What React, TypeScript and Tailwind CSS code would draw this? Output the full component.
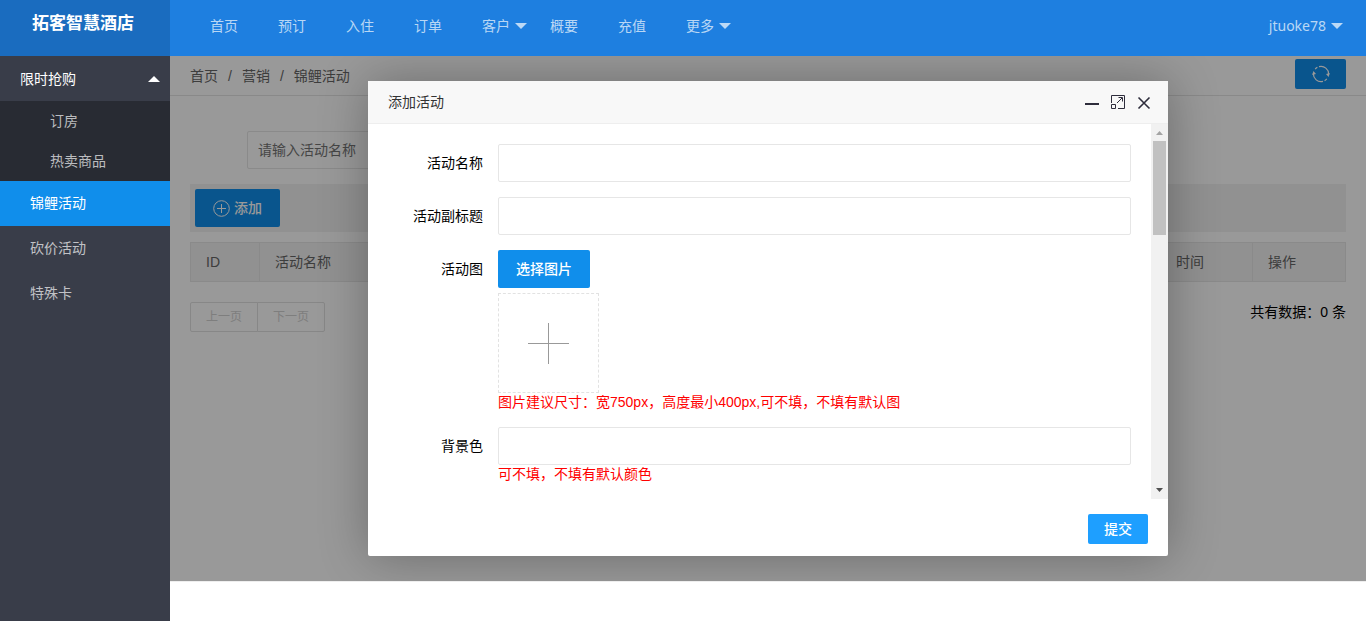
import React, { useState } from "react";

const topLinks = [
  { name: "首页" },
  { name: "预订" },
  { name: "入住" },
  { name: "订单" },
  { name: "客户", more: true },
  { name: "概要" },
  { name: "充值" },
  { name: "更多", more: true },
];

const sideLinks = ["锦鲤活动", "砍价活动", "特殊卡"];

function Caret({ className }: { className: string }) {
  return (
    <svg className={className} width="12" height="6" viewBox="0 0 12 6">
      <path d="M0 0h12L6 6z" fill="currentColor" />
    </svg>
  );
}

function RefreshIcon() {
  return (
    <svg width="18" height="18" viewBox="0 0 18 18" fill="none" stroke="currentColor">
      {/* Two half turns, each with a short broken-off piece */}
      <path d="M7 1.7A7.6 7.6 0 0 1 16.6 9.6M11 16.3A7.6 7.6 0 0 1 1.4 8.4" strokeWidth="1.2" />
      <path d="M3.2 4.1A7.6 7.6 0 0 1 5.4 2.3M14.8 13.9A7.6 7.6 0 0 1 12.6 15.7" strokeWidth="1.2" />
      <path d="M14 9l2.6 3L17.8 8zM4 9L1.4 6 .2 10z" fill="currentColor" stroke="none" />
    </svg>
  );
}

function AddIcon() {
  return (
    <svg width="17" height="17" viewBox="0 0 17 17" fill="none" stroke="currentColor">
      <circle cx="8.5" cy="8.5" r="7.8" />
      <path d="M8.5 4v9M4 8.5h9" />
    </svg>
  );
}

function Header() {
  return (
    <header className="flex h-14 shrink-0 bg-[#1e7fe0] font-['Noto_Sans','Noto_Sans_CJK_SC',sans-serif] text-white/70">
      <h1 className="w-[170px] shrink-0 bg-[#1a6cbf] pr-1 text-center text-[17px] leading-[46px] font-bold text-white">
        拓客智慧酒店
      </h1>
      <nav className="flex flex-1 px-5 leading-[52px]">
        {topLinks.map((link) => (
          <a key={link.name} href="#" className="relative px-5">
            {link.name}
            {link.more && <Caret className="absolute top-[23px] right-[3px]" />}
          </a>
        ))}
        <a href="#" className="relative ml-auto px-5">
          jtuoke78
          <Caret className="absolute top-[23px] right-[3px]" />
        </a>
      </nav>
    </header>
  );
}

function Sidebar() {
  const [active, setActive] = useState("锦鲤活动");
  return (
    <aside className="w-[170px] shrink-0 bg-[#393d49] text-white/70">
      <a href="#" className="flex h-[45px] items-center justify-between pr-[10px] pl-5 text-white">
        限时抢购
        <Caret className="rotate-180" />
      </a>
      <div className="bg-[#282b33] leading-10">
        <a href="#" className="block pl-[50px]">订房</a>
        <a href="#" className="block pl-[50px]">热卖商品</a>
      </div>
      {sideLinks.map((name) => (
        <a
          key={name}
          href="#"
          onClick={() => setActive(name)}
          className={
            active === name
              ? "block bg-[#108eeb] pl-[30px] leading-[45px] text-white"
              : "block pl-[30px] leading-[45px]"
          }
        >
          {name}
        </a>
      ))}
    </aside>
  );
}

function ActivityList() {
  return (
    <div>
      {/* Breadcrumb */}
      <div className="flex h-10 items-center justify-between border-b border-[#e5e5e5] px-5 text-[#666]">
        <div className="flex gap-[10px]">
          <a href="#">首页</a>
          <span>/</span>
          <a href="#">营销</a>
          <span>/</span>
          <a href="#">锦鲤活动</a>
        </div>
        <button
          aria-label="刷新"
          className="mb-[3px] flex h-[30px] w-[51px] items-center justify-center rounded-xs bg-[#108eeb] text-white"
        >
          <RefreshIcon />
        </button>
      </div>

      <div className="px-5 pt-[35px]">
        <input
          aria-label="活动名称"
          placeholder="请输入活动名称"
          className="ml-[57px] block h-[38px] w-[190px] rounded-xs border border-[#e6e6e6] pl-[10px] placeholder:text-[#757575]"
        />

        <div className="mt-[15px] bg-[#f2f2f2] p-[5px]">
          <button className="flex h-[38px] w-[85px] items-center justify-center gap-1 rounded-xs bg-[#108eeb] font-medium text-white">
            <AddIcon />
            添加
          </button>
        </div>

        <table className="mt-[10px] w-full table-fixed border-collapse bg-[#f2f2f2] text-left text-[#666]">
          <thead>
            <tr className="h-[39px]">
              <th className="w-[69px] border border-[#e6e6e6] px-[15px] font-normal">ID</th>
              <th className="border border-[#e6e6e6] px-[15px] font-normal">活动名称</th>
              <th className="w-[92px] border border-[#e6e6e6] px-[15px] font-normal">时间</th>
              <th className="w-[93px] border border-[#e6e6e6] px-[15px] font-normal">操作</th>
            </tr>
          </thead>
        </table>

        <div className="mt-5 flex justify-between">
          <div className="flex text-xs text-[#d2d2d2]">
            <button className="h-[30px] w-[68px] rounded-l-xs border border-[#e2e2e2]">上一页</button>
            <button className="-ml-px h-[30px] w-[68px] rounded-r-xs border border-[#e2e2e2]">下一页</button>
          </div>
          <span className="leading-5">共有数据：0 条</span>
        </div>
      </div>
    </div>
  );
}

function Field({ id, label, children }: { id: string; label: string; children: React.ReactNode }) {
  return (
    <div className="mb-[15px] flex">
      <label htmlFor={id} className="w-[110px] shrink-0 px-[15px] text-right leading-[38px]">
        {label}
      </label>
      <div className="min-w-0 flex-1">{children}</div>
    </div>
  );
}

const inputStyle = "block h-[38px] w-full rounded-xs border border-[#e6e6e6] px-[10px]";

function AddDialog() {
  return (
    <div
      role="dialog"
      aria-label="添加活动"
      className="flex h-[475px] w-[800px] flex-col rounded-xs bg-white shadow-[1px_1px_50px_rgba(0,0,0,0.3)]"
    >
      <div className="flex h-[43px] shrink-0 items-center justify-between border-b border-[#eee] bg-[#f8f8f8] pr-4 pl-5 text-[#333]">
        添加活动
        <div className="flex gap-[10px] text-[#2e2d3c]">
          <button aria-label="最小化">
            <svg width="16" height="16" viewBox="0 0 16 16">
              <path d="M1 9h14v2H1z" fill="currentColor" />
            </svg>
          </button>
          <button aria-label="最大化">
            <svg width="16" height="16" viewBox="0 0 16 16" fill="none" stroke="currentColor">
              <path d="M1.5 9V1.5h13v13H8M1.5 10.5h4v4h-4zM7 9l5-5M8.5 3.5h4v4" />
            </svg>
          </button>
          <button aria-label="关闭">
            <svg width="16" height="16" viewBox="0 0 16 16" fill="none" stroke="currentColor">
              <path d="M2.5 3.5l11 11M13.5 3.5l-11 11" strokeWidth="1.6" />
            </svg>
          </button>
        </div>
      </div>

      <div className="flex min-h-0 flex-1">
        <form className="flex-1 overflow-hidden p-5">
          <Field id="name" label="活动名称">
            <input id="name" className={inputStyle} />
          </Field>
          <Field id="subtitle" label="活动副标题">
            <input id="subtitle" className={inputStyle} />
          </Field>
          <Field id="picture" label="活动图">
            <button
              id="picture"
              type="button"
              className="block h-[38px] w-[92px] rounded-xs bg-[#108eeb] font-medium text-white"
            >
              选择图片
            </button>
            <div className="mt-[5px] flex h-[100px] w-[101px] items-center justify-center border border-dashed border-[#e2e2e2] text-[#999]">
              <svg width="41" height="42" viewBox="0 0 41 42" stroke="currentColor">
                <path d="M20.5 1v41M0 21.5h41" />
              </svg>
            </div>
            <p className="leading-[19px] text-[#f00]">
              图片建议尺寸：宽750px，高度最小400px,可不填，不填有默认图
            </p>
          </Field>
          <Field id="color" label="背景色">
            <input id="color" className={inputStyle} />
            <p className="leading-[19px] text-[#f00]">可不填，不填有默认颜色</p>
          </Field>
        </form>

        {/* Scrollbar */}
        <div className="flex w-[17px] flex-col items-center bg-[#f1f1f1] text-[#a3a3a3]">
          <svg width="17" height="17" viewBox="0 0 17 17">
            <path d="M5 11h7L8.5 7z" fill="currentColor" />
          </svg>
          <div className="h-[94px] w-[13px] bg-[#c1c1c1]" />
          <svg className="mt-auto text-[#505050]" width="17" height="17" viewBox="0 0 17 17">
            <path d="M5 6h7l-3.5 4z" fill="currentColor" />
          </svg>
        </div>
      </div>

      <div className="flex h-[57px] shrink-0 justify-end px-5 pt-[15px]">
        <button className="h-[30px] w-[60px] rounded-xs bg-[#1e9fff] font-medium text-white">提交</button>
      </div>
    </div>
  );
}

export default function App() {
  return (
    <div className="flex h-screen flex-col bg-white font-['Liberation_Sans','Noto_Sans_CJK_SC',sans-serif] text-sm text-black">
      <Header />
      <div className="flex min-h-0 flex-1">
        <Sidebar />
        <div className="flex min-w-0 flex-1 flex-col">
          <main className="relative flex-1 overflow-hidden">
            <ActivityList />
            <div className="absolute inset-0 flex items-center justify-center bg-black/40">
              <AddDialog />
            </div>
          </main>
          <footer className="h-10 shrink-0 border-t border-[#eee]" />
        </div>
      </div>
    </div>
  );
}
